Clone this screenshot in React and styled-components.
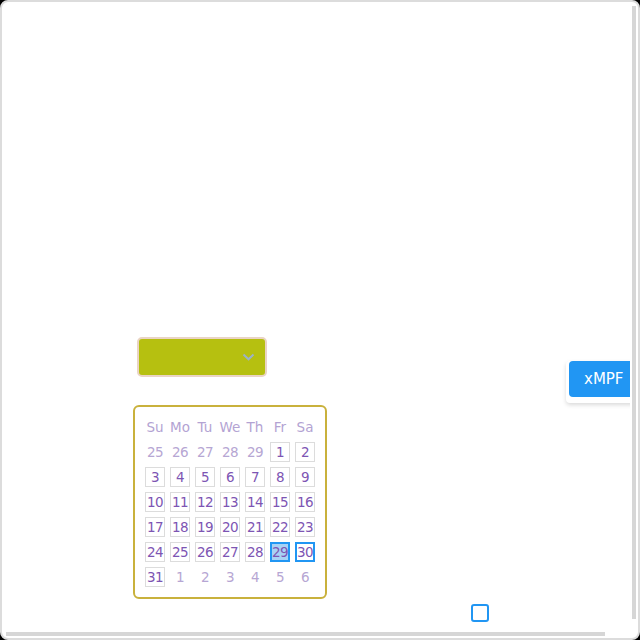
import React from "react";
import styled, { createGlobalStyle } from "styled-components";

const GlobalStyle = createGlobalStyle`
  html, body {
    margin: 0;
    padding: 0;
    background: #000;
  }
  body {
    font-family: "DejaVu Sans", "Noto Sans", sans-serif;
  }
`;

const Frame = styled.div`
  width: 640px;
  height: 640px;
  box-sizing: border-box;
  border: 2px solid #dcdcdc;
  border-radius: 8px;
  background: #fff;
  overflow: hidden;
  display: grid;
  grid-template-columns: 628px 8px;
  grid-template-rows: 628px 8px;
`;

const Viewport = styled.div`
  overflow: hidden;
`;

const VTrack = styled.div`
  padding: 4px 2px 0 2px;
`;

const VThumb = styled.div`
  width: 4px;
  height: 613px;
  background: #d6d6d6;
`;

const HTrack = styled.div`
  padding: 2px 0 0 4px;
`;

const HThumb = styled.div`
  width: 599px;
  height: 4px;
  background: #d6d6d6;
`;

const Canvas = styled.div`
  width: 646px;
  height: 631px;
  box-sizing: border-box;
  padding-top: 335px;
`;

const TopRow = styled.div`
  display: flex;
  align-items: flex-start;
`;

const LeftColumn = styled.div`
  display: flex;
  flex-direction: column;
  align-items: flex-start;
  padding-left: 131px;
`;

const Select = styled.div`
  margin-left: 4px;
  width: 130px;
  height: 40px;
  box-sizing: border-box;
  border: 2px solid #ead4c4;
  border-radius: 5px;
  background: #b6c010;
  display: flex;
  align-items: center;
  justify-content: flex-end;
  padding-right: 10px;
`;

const Calendar = styled.div`
  margin-top: 28px;
  width: 194px;
  box-sizing: border-box;
  border: 2px solid #c9b13c;
  border-radius: 6px;
  padding: 10px;
  display: grid;
  grid-template-columns: repeat(7, 20px);
  grid-auto-rows: 20px;
  gap: 5px;
`;

const DayName = styled.div`
  display: flex;
  align-items: center;
  justify-content: center;
  font-size: 13.5px;
  color: #b3a3d3;
  white-space: nowrap;
`;

const Day = styled.div`
  display: flex;
  align-items: center;
  justify-content: center;
  box-sizing: border-box;
  font-size: 13.5px;
  letter-spacing: -0.5px;
  white-space: nowrap;
  color: ${(p) => (p.$muted ? "#b6a6d3" : "#7d55b3")};
  border: ${(p) =>
    p.$muted
      ? "1px solid transparent"
      : p.$selected || p.$focus
      ? "2px solid #2196f3"
      : "1px solid #dcdcdc"};
  background: ${(p) => (p.$selected ? "#a8d2f5" : "transparent")};
`;

const ButtonCard = styled.div`
  margin-left: 239px;
  margin-top: 24px;
  padding-bottom: 6px;
  padding-left: 3px;
  border-radius: 4px;
  background: #fff;
  box-shadow: 0 2px 4px rgba(0, 0, 0, 0.15);
`;

const ActionButton = styled.button`
  display: block;
  height: 36px;
  width: 78px;
  padding: 0 0 0 15px;
  border: none;
  border-radius: 4px;
  background: #2196f3;
  color: #fff;
  font-family: "DejaVu Sans", sans-serif;
  font-size: 15px;
  text-align: left;
`;

const Checkbox = styled.div`
  margin-left: 469px;
  margin-top: 5px;
  width: 18px;
  height: 18px;
  box-sizing: border-box;
  border: 2px solid #2196f3;
  border-radius: 3px;
`;

const Chevron = () => (
  <svg width="13" height="8" viewBox="0 0 13 8">
    <path d="M1.5 1.5 L6.5 6.3 L11.5 1.5" fill="none" stroke="#9cb2c8" strokeWidth="2" />
  </svg>
);

const dayNames = ["Su", "Mo", "Tu", "We", "Th", "Fr", "Sa"];

const buildDays = () => {
  const days = [];
  [25, 26, 27, 28, 29].forEach((d) => days.push({ d, muted: true }));
  for (let d = 1; d <= 31; d++) days.push({ d });
  [1, 2, 3, 4, 5, 6].forEach((d) => days.push({ d, muted: true }));
  return days;
};

export default function App() {
  const days = buildDays();
  return (
    <>
      <GlobalStyle />
      <Frame>
        <Viewport>
          <Canvas>
            <TopRow>
              <LeftColumn>
                <Select>
                  <Chevron />
                </Select>
                <Calendar>
                  {dayNames.map((n) => (
                    <DayName key={n}>{n}</DayName>
                  ))}
                  {days.map((item, i) => (
                    <Day
                      key={i}
                      $muted={item.muted}
                      $selected={!item.muted && item.d === 29}
                      $focus={!item.muted && item.d === 30}
                    >
                      {item.d}
                    </Day>
                  ))}
                </Calendar>
              </LeftColumn>
              <ButtonCard>
                <ActionButton>xMPF</ActionButton>
              </ButtonCard>
            </TopRow>
            <Checkbox />
          </Canvas>
        </Viewport>
        <VTrack>
          <VThumb />
        </VTrack>
        <HTrack>
          <HThumb />
        </HTrack>
      </Frame>
    </>
  );
}
